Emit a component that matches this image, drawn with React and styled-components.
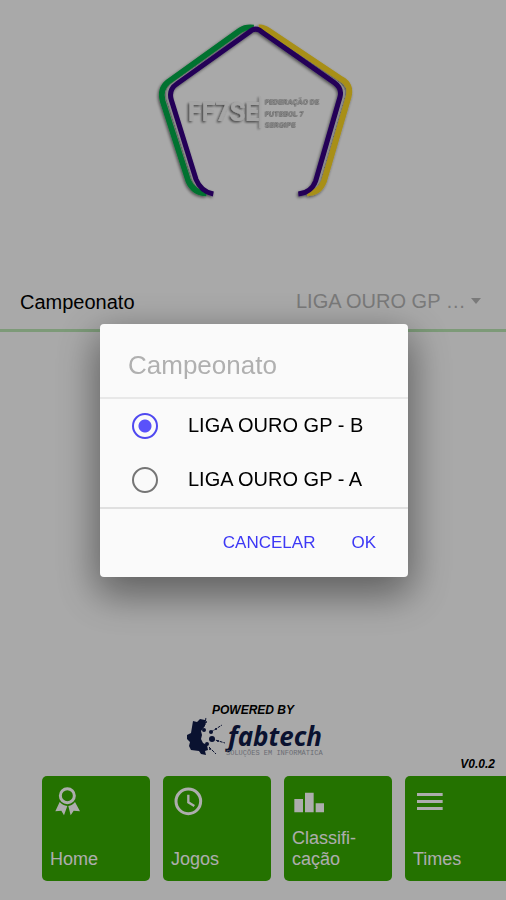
import React, { useState } from "react";
import styled, { createGlobalStyle } from "styled-components";

const GlobalStyle = createGlobalStyle`
  *, *::before, *::after { box-sizing: border-box; }
  body {
    margin: 0;
    background: #fafafa;
    color: #000;
    font-family: "Liberation Sans", Arial, sans-serif;
  }
  button, select, input { font: inherit; margin: 0; }
`;

const Page = styled.main`
  display: flex;
  flex-direction: column;
  min-height: 100vh;
  overflow: hidden;
`;

const Hero = styled.header`
  display: flex;
  justify-content: center;
  padding: 16px 0 64px 4px;
`;

const SelectRow = styled.div`
  display: flex;
  align-items: center;
  justify-content: space-between;
  height: 62px;
  padding: 6px 24px 0 20px;
  border-bottom: 3px solid #b8e4b2;
  font-size: 20px;
`;

const SelectBox = styled.div`
  display: flex;
  align-items: center;
  padding-bottom: 4px;
  color: #b4b4b4;
`;

const Select = styled.select`
  appearance: none;
  width: 174px;
  padding: 0;
  border: 0;
  background: none;
  color: inherit;
  font-size: 20px;
  line-height: 24px;
  white-space: nowrap;
  overflow: hidden;
  text-overflow: ellipsis;
`;

const Footer = styled.footer`
  display: flex;
  flex-direction: column;
  align-items: center;
  margin-top: auto;
  padding-bottom: 19px;
`;

const Powered = styled.p`
  margin: 0;
  font-size: 12px;
  line-height: 14px;
  font-weight: 700;
  font-style: italic;
`;

const Version = styled.span`
  align-self: flex-end;
  padding-right: 11px;
  margin-bottom: 5px;
  font-size: 12px;
  line-height: 14px;
  font-weight: 700;
  font-style: italic;
`;

const Tiles = styled.nav`
  display: flex;
  gap: 13px;
  width: 100%;
  padding-left: 42px;
  overflow: hidden;
`;

const Tile = styled.button`
  display: flex;
  flex: 0 0 108px;
  flex-direction: column;
  justify-content: space-between;
  align-items: flex-start;
  height: 105px;
  padding: 8px 8px 11px;
  border: 0;
  border-radius: 5px;
  background: #36a900;
  color: #fff;
  font-size: 18px;
  line-height: 21px;
  text-align: left;
  white-space: pre-line;
`;

const Backdrop = styled.div`
  position: fixed;
  inset: 0;
  display: flex;
  align-items: center;
  justify-content: center;
  padding-left: 2px;
  background: rgba(0, 0, 0, 0.32);
`;

const Dialog = styled.form`
  width: 308px;
  max-width: 90%;
  border-radius: 4px;
  background: #fafafa;
  box-shadow: 0 14px 40px 4px rgba(0, 0, 0, 0.45);
`;

const DialogTitle = styled.h2`
  margin: 0;
  padding: 26px 28px 17px;
  border-bottom: 2px solid #e8e8e8;
  color: #b0b0b0;
  font-size: 26px;
  line-height: 30px;
  font-weight: 400;
`;

const Options = styled.div`
  border-bottom: 2px solid #e0e0e0;
`;

const Option = styled.label`
  display: flex;
  align-items: center;
  gap: 30px;
  height: 54px;
  padding-left: 32px;
  font-size: 20px;
`;

const Radio = styled.input`
  appearance: none;
  flex: none;
  width: 26px;
  height: 26px;
  border: 2px solid #757575;
  border-radius: 50%;
  background: #fafafa;

  &:checked {
    border-color: #4f48f0;
    background: radial-gradient(circle, #5a52fa 6px, #fafafa 7px);
  }
`;

const Actions = styled.div`
  display: flex;
  justify-content: flex-end;
  align-items: center;
  height: 68px;
  gap: 16px;
  padding-right: 22px;
`;

const Action = styled.button`
  padding: 10px;
  border: 0;
  background: none;
  color: #3d38f5;
  font-size: 17px;
  line-height: 20px;
`;

function LeagueLogo() {
  return (
    <svg width="220" height="190" viewBox="0 0 660 570" role="img" aria-label="FF7SE">
      <defs>
        <filter id="drop" x="-10%" y="-10%" width="120%" height="120%">
          <feDropShadow dx="-3" dy="4" stdDeviation="4" floodColor="#000" floodOpacity="0.55" />
        </filter>
        <filter id="letters" x="-10%" y="-20%" width="120%" height="140%">
          <feDropShadow dx="-5" dy="4" stdDeviation="3" floodColor="#000" floodOpacity="0.6" />
        </filter>
        <filter id="small" x="-10%" y="-20%" width="120%" height="140%">
          <feDropShadow dx="-2" dy="2" stdDeviation="2" floodColor="#000" floodOpacity="0.5" />
        </filter>
      </defs>
      <g fill="none" filter="url(#drop)">
        <path d="M184 532Q147 532 130 495L53 255Q43 219 69 198L285 43Q302 32 326 35" stroke="#00a846" strokeWidth="17" />
        <path d="M342 34Q354 32 370 43L590 190Q620 207 611 242L537 496Q523 532 487 532" stroke="#f8d322" strokeWidth="17" />
        <path d="M195 526Q158 522 145 490L69 251Q60 220 87 202L310 48Q332 33 352 48L575 198Q602 217 594 246L522 495Q507 526 470 527" stroke="#cfcfcf" strokeWidth="6" />
        <path d="M205 534Q168 527 153 490L79 252Q70 221 95 204L312 49Q332 30 352 49L568 200Q592 217 585 243L512 495Q499 530 460 534" stroke="#340080" strokeWidth="15" />
      </g>
      <g fill="#f4f4f4" filter="url(#letters)">
        <text x="129" y="316" fontFamily="Roboto, sans-serif" fontWeight="700" fontSize="75">FF7SE</text>
        <path d="M344 240h4v96h-4z" />
      </g>
      <g fill="#bdbdbd" filter="url(#small)" fontFamily="Roboto, sans-serif" fontWeight="700" fontSize="23">
        <text x="361" y="265">FEDERAÇÃO DE</text>
        <text x="361" y="299">FUTEBOL 7</text>
        <text x="361" y="333">SERGIPE</text>
      </g>
    </svg>
  );
}

function FabtechLogo() {
  return (
    <svg width="146" height="40" viewBox="-4 0 146 40" role="img" aria-label="fabtech soluções em informática">
      <g fill="#101b48">
        <path d="M9 4l4 1 3-3 5 1v6l-4 5 1 4-1 4 2 4 4 2 1 5-3 1 1 4-5-1-2-3-8-1-2-4 1-4-3-3v-4l4-2z" />
        <circle cx="20" cy="13" r="2" />
        <circle cx="27" cy="15" r="2" />
        <circle cx="28" cy="22" r="3" />
        <circle cx="23" cy="27" r="2" />
        <circle cx="26" cy="32" r="1" />
        <circle cx="22" cy="5" r="1" />
        <circle cx="32" cy="12" r="1" />
        <circle cx="34" cy="24" r="1" />
        <path d="M21 8l1-8M27 15l11-7M28 22l13 4M25 30l7 7" fill="none" stroke="#101b48" strokeDasharray="3 1" />
        <text x="44" y="29" fontFamily="'Noto Sans', 'Open Sans', sans-serif" fontSize="26" fontWeight="700" fontStyle="italic">fabtech</text>
      </g>
      <text x="42" y="38" fill="#9a9eaa" fontFamily="'Liberation Mono', monospace" fontSize="7">SOLUÇÕES EM INFORMÁTICA</text>
    </svg>
  );
}

const icons = {
  award: (
    <>
      <circle cx="52" cy="35" r="21" fill="none" stroke="currentColor" strokeWidth="9" />
      <path d="M29 54L16 82l18-2 8 14 10-28Q38 65 29 54zM75 54l15 28-19-2-9 14-7-28Q67 65 75 54z" fill="currentColor" />
    </>
  ),
  clock: (
    <g fill="none" stroke="currentColor">
      <circle cx="52" cy="52" r="37" strokeWidth="9" />
      <path d="M52 32v23l18 11" strokeWidth="7" />
    </g>
  ),
  podium: <path d="M7 45h26v40H7zM39 26h26v59H39zM71 58h25v27H71z" fill="currentColor" />,
  menu: <path d="M12 27h77v9H12zM12 48h77v9H12zM12 69h77v9H12z" fill="currentColor" />,
};

const tiles = [
  { icon: "award", label: "Home" },
  { icon: "clock", label: "Jogos" },
  { icon: "podium", label: "Classifi-\ncação" },
  { icon: "menu", label: "Times" },
];

const leagues = ["LIGA OURO GP - B", "LIGA OURO GP - A"];

export default function App() {
  const [league, setLeague] = useState(leagues[0]);
  const choose = (event) => setLeague(event.target.value);

  return (
    <>
      <GlobalStyle />
      <Page>
        <Hero>
          <LeagueLogo />
        </Hero>
        <SelectRow>
          <label htmlFor="league">Campeonato</label>
          <SelectBox>
            <Select id="league" value={league} onChange={choose}>
              {leagues.map((name) => (
                <option key={name}>{name}</option>
              ))}
            </Select>
            <svg width="12" height="6" viewBox="0 0 12 6" aria-hidden="true">
              <path d="M1 0h10L6 6z" fill="currentColor" />
            </svg>
          </SelectBox>
        </SelectRow>
        <Footer>
          <Powered>POWERED BY</Powered>
          <FabtechLogo />
          <Version>V0.0.2</Version>
          <Tiles>
            {tiles.map(({ icon, label }) => (
              <Tile key={icon} type="button">
                <svg width="32" height="32" viewBox="0 0 96 96" aria-hidden="true">
                  {icons[icon]}
                </svg>
                <span>{label}</span>
              </Tile>
            ))}
          </Tiles>
        </Footer>
      </Page>
      <Backdrop>
        <Dialog role="dialog" aria-labelledby="dialog-title">
          <DialogTitle id="dialog-title">Campeonato</DialogTitle>
          <Options role="radiogroup" aria-labelledby="dialog-title">
            {leagues.map((name) => (
              <Option key={name}>
                <Radio type="radio" name="league" value={name} checked={league === name} onChange={choose} />
                {name}
              </Option>
            ))}
          </Options>
          <Actions>
            <Action type="button">CANCELAR</Action>
            <Action type="button">OK</Action>
          </Actions>
        </Dialog>
      </Backdrop>
    </>
  );
}
